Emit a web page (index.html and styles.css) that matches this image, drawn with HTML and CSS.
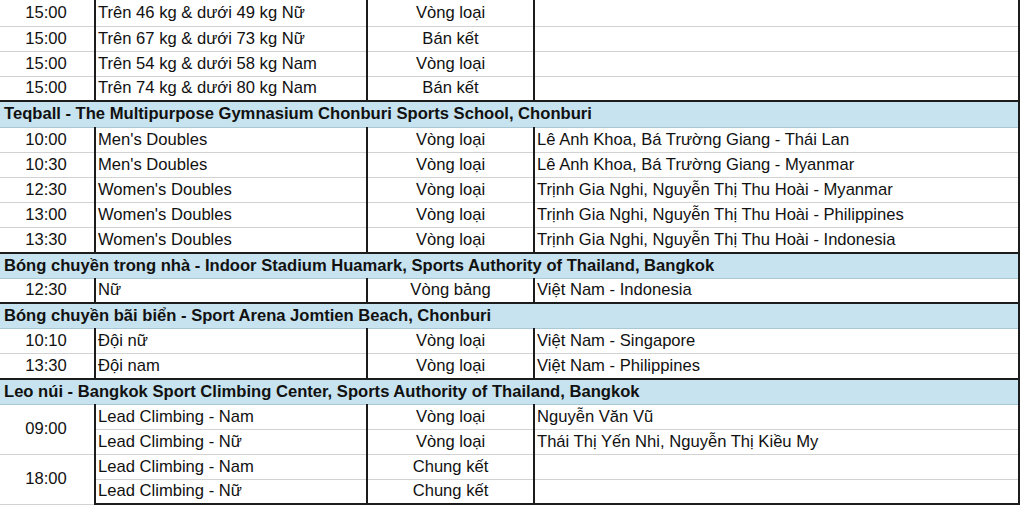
FILE: index.html
```html
<!DOCTYPE html>
<html lang="vi">
<head>
<meta charset="utf-8">
<title>Lịch thi đấu</title>
<link rel="stylesheet" href="styles.css">
</head>
<body>
<table class="sched">
  <colgroup>
    <col class="c-time">
    <col class="c-event">
    <col class="c-round">
    <col class="c-ath">
  </colgroup>
  <tbody>
    <tr class="tall"><td class="t">15:00</td><td class="e">Trên 46 kg &amp; dưới 49 kg Nữ</td><td class="r">Vòng loại</td><td class="a"></td></tr>
    <tr><td class="t">15:00</td><td class="e">Trên 67 kg &amp; dưới 73 kg Nữ</td><td class="r">Bán kết</td><td class="a"></td></tr>
    <tr><td class="t">15:00</td><td class="e">Trên 54 kg &amp; dưới 58 kg Nam</td><td class="r">Vòng loại</td><td class="a"></td></tr>
    <tr><td class="t">15:00</td><td class="e">Trên 74 kg &amp; dưới 80 kg Nam</td><td class="r">Bán kết</td><td class="a"></td></tr>
    <tr class="tall head"><td colspan="4">Teqball - The Multipurpose Gymnasium Chonburi Sports School, Chonburi</td></tr>
    <tr><td class="t">10:00</td><td class="e">Men's Doubles</td><td class="r">Vòng loại</td><td class="a">Lê Anh Khoa, Bá Trường Giang - Thái Lan</td></tr>
    <tr><td class="t">10:30</td><td class="e">Men's Doubles</td><td class="r">Vòng loại</td><td class="a">Lê Anh Khoa, Bá Trường Giang - Myanmar</td></tr>
    <tr><td class="t">12:30</td><td class="e">Women's Doubles</td><td class="r">Vòng loại</td><td class="a">Trịnh Gia Nghi, Nguyễn Thị Thu Hoài - Myanmar</td></tr>
    <tr><td class="t">13:00</td><td class="e">Women's Doubles</td><td class="r">Vòng loại</td><td class="a">Trịnh Gia Nghi, Nguyễn Thị Thu Hoài - Philippines</td></tr>
    <tr class="tall"><td class="t">13:30</td><td class="e">Women's Doubles</td><td class="r">Vòng loại</td><td class="a">Trịnh Gia Nghi, Nguyễn Thị Thu Hoài - Indonesia</td></tr>
    <tr class="head"><td colspan="4">Bóng chuyền trong nhà - Indoor Stadium Huamark, Sports Authority of Thailand, Bangkok</td></tr>
    <tr><td class="t">12:30</td><td class="e">Nữ</td><td class="r">Vòng bảng</td><td class="a">Việt Nam - Indonesia</td></tr>
    <tr class="head"><td colspan="4">Bóng chuyền bãi biển - Sport Arena Jomtien Beach, Chonburi</td></tr>
    <tr><td class="t">10:10</td><td class="e">Đội nữ</td><td class="r">Vòng loại</td><td class="a">Việt Nam - Singapore</td></tr>
    <tr class="tall"><td class="t">13:30</td><td class="e">Đội nam</td><td class="r">Vòng loại</td><td class="a">Việt Nam - Philippines</td></tr>
    <tr class="head"><td colspan="4">Leo núi - Bangkok Sport Climbing Center, Sports Authority of Thailand, Bangkok</td></tr>
    <tr><td class="t" rowspan="2">09:00</td><td class="e">Lead Climbing - Nam</td><td class="r">Vòng loại</td><td class="a">Nguyễn Văn Vũ</td></tr>
    <tr><td class="e">Lead Climbing - Nữ</td><td class="r">Vòng loại</td><td class="a">Thái Thị Yến Nhi, Nguyễn Thị Kiều My</td></tr>
    <tr><td class="t" rowspan="2">18:00</td><td class="e">Lead Climbing - Nam</td><td class="r">Chung kết</td><td class="a"></td></tr>
    <tr class="last"><td class="e">Lead Climbing - Nữ</td><td class="r">Chung kết</td><td class="a"></td></tr>
  </tbody>
</table>
</body>
</html>
```

FILE: styles.css
```css
html, body {
  margin: 0;
  padding: 0;
  background: #ffffff;
  overflow: hidden;
}

.sched {
  border-collapse: collapse;
  table-layout: fixed;
  width: 1019px;
  font-family: "Liberation Sans", Arial, sans-serif;
  font-size: 16.6px;
  color: #111111;
}

.c-time { width: 95px; }
.c-event { width: 272px; }
.c-round { width: 167px; }
.c-ath { width: 485px; }

.sched tr { height: 25px; }
.sched tr.tall { height: 26px; }

.sched td {
  padding: 0 2px;
  border-bottom: 1px solid #d2d2d2;
  border-right: 2px solid #1c1c1c;
  white-space: nowrap;
  overflow: hidden;
  vertical-align: middle;
  line-height: 18px;
}

.sched td.t {
  text-align: center;
  padding-right: 4px;
}

.sched td.e { padding-left: 2px; }
.sched td.r { text-align: center; }
.sched td.a { padding-left: 2px; }

.sched tr.head td {
  background: #c7e3ef;
  font-weight: bold;
  padding-left: 4px;
  border-top: 2px solid #1c1c1c;
  border-bottom: 1px solid #a9c7d5;
}

.sched tr.last td {
  border-bottom: 2px solid #1c1c1c;
}
```
